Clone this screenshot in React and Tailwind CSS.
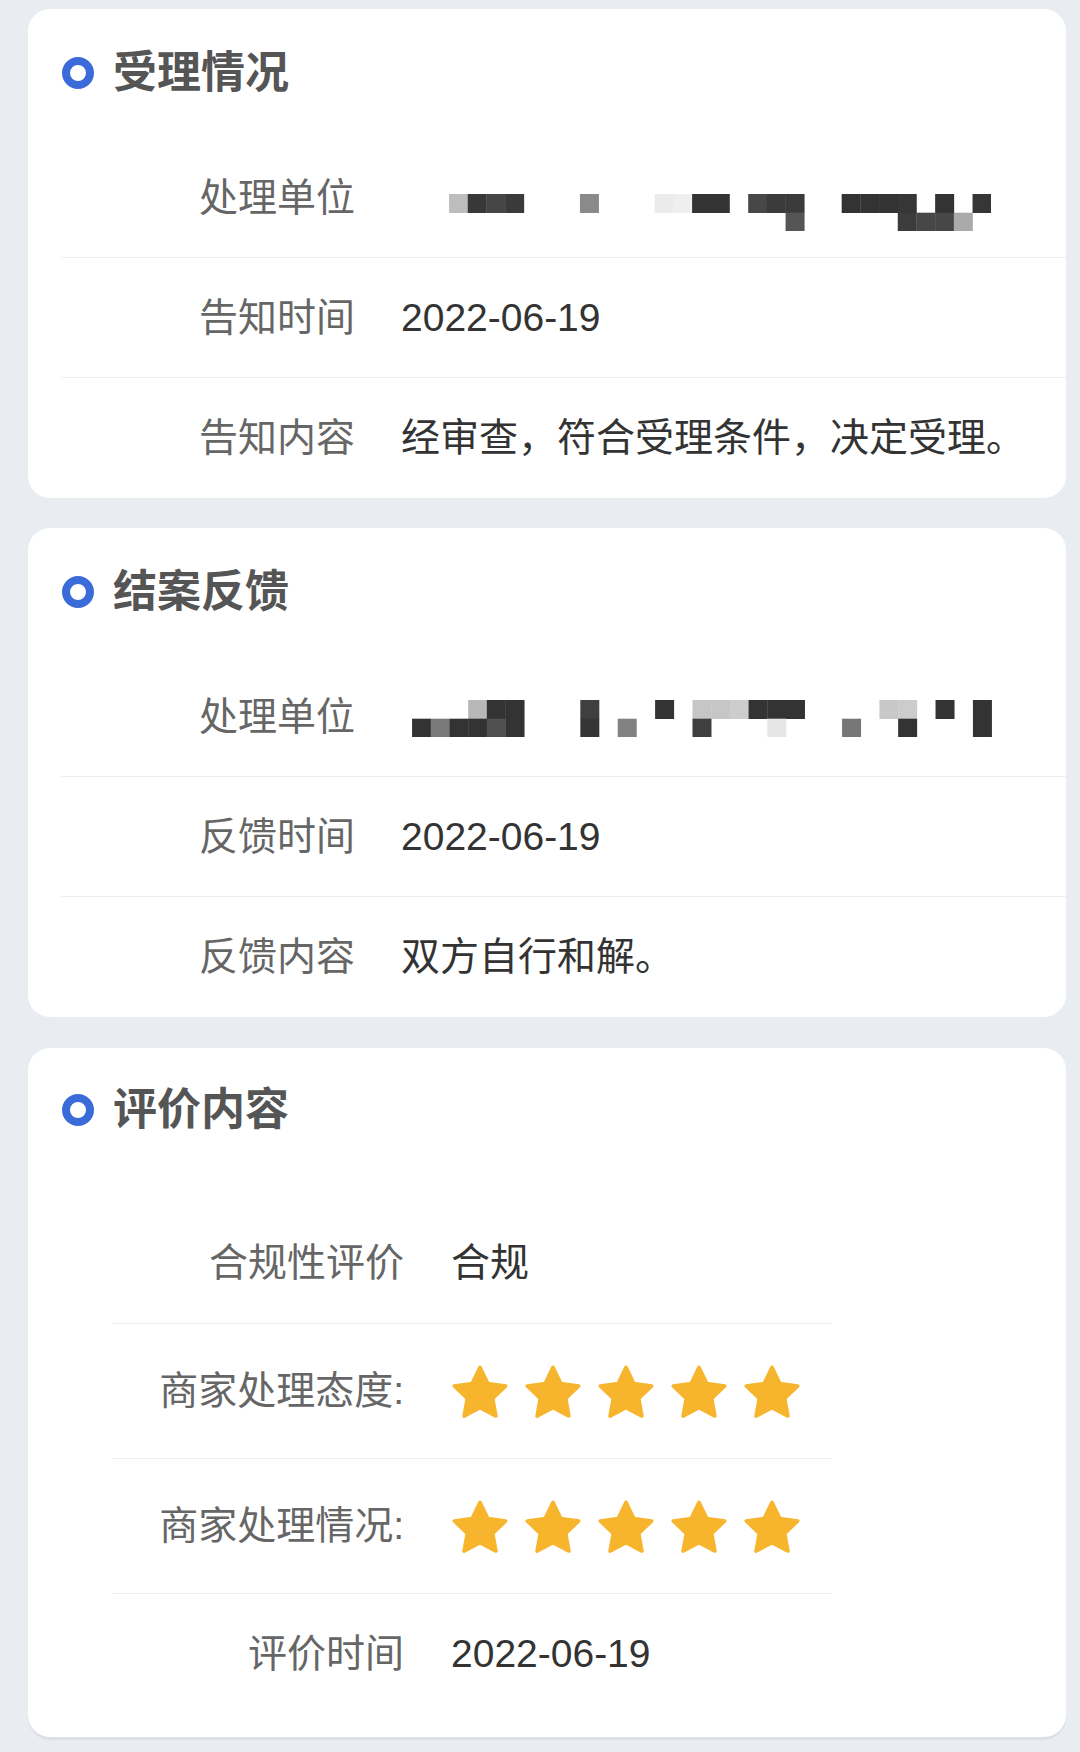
import React from 'react'

const CELL = 18.7

// redacted text, drawn as mosaic blocks [row, col, colour]
const mosaicA = [
  [0, 0, '#bdbdbd'], [0, 1, '#383838'], [0, 2, '#454545'], [0, 3, '#3a3a3a'],
  [0, 7, '#8a8a8a'], [0, 11, '#ebebeb'], [0, 12, '#efefef'], [0, 13, '#333333'],
  [0, 14, '#333333'], [0, 16, '#474747'], [0, 17, '#3b3b3b'], [0, 18, '#3b3b3b'],
  [0, 21, '#333333'], [0, 22, '#333333'], [0, 23, '#333333'], [0, 24, '#363636'],
  [0, 26, '#333333'], [0, 28, '#363636'],
  [1, 18, '#555555'], [1, 24, '#3c3c3c'], [1, 25, '#474747'], [1, 26, '#474747'],
  [1, 27, '#aaaaaa'],
]

const mosaicB = [
  [0, 3, '#b8b8b8'], [0, 4, '#333333'], [0, 5, '#333333'], [0, 9, '#3f3f3f'],
  [0, 13, '#333333'], [0, 15, '#c6c6c6'], [0, 16, '#c6c6c6'], [0, 17, '#cdcdcd'],
  [0, 18, '#333333'], [0, 19, '#333333'], [0, 20, '#333333'], [0, 25, '#c8c8c8'],
  [0, 26, '#cccccc'], [0, 28, '#333333'], [0, 30, '#333333'],
  [1, 0, '#333333'], [1, 1, '#7a7a7a'], [1, 2, '#333333'], [1, 3, '#333333'],
  [1, 4, '#505050'], [1, 5, '#333333'], [1, 9, '#353535'], [1, 11, '#828282'],
  [1, 15, '#3f3f3f'], [1, 19, '#e6e6e6'], [1, 23, '#777777'], [1, 26, '#333333'],
  [1, 30, '#333333'],
]

function Mosaic({ blocks, cols, className }) {
  const w = cols * CELL
  return (
    <svg width={w} height={CELL * 2} viewBox={`0 0 ${w} ${CELL * 2}`} className={className}>
      {blocks.map(([r, c, fill]) => (
        <rect key={`${r}-${c}`} x={c * CELL} y={r * CELL} width={CELL + 0.3} height={CELL + 0.3} fill={fill} />
      ))}
    </svg>
  )
}

function Star() {
  return (
    <svg width="56" height="53" viewBox="1.2 0.7 21.6 20.6">
      <polygon
        points="12,1.6 15.05,7.95 22,8.85 16.95,13.7 18.2,20.55 12,17.25 5.8,20.55 7.05,13.7 2,8.85 8.95,7.95"
        fill="#f7b52e"
        stroke="#f7b52e"
        strokeWidth="1.4"
        strokeLinejoin="round"
      />
    </svg>
  )
}

function Stars() {
  return (
    <div className="ml-[48px] flex gap-[17px]">
      {[0, 1, 2, 3, 4].map(i => <Star key={i} />)}
    </div>
  )
}

function Header({ title, className }) {
  return (
    <div className={`ml-[34px] flex h-[48px] items-center ${className}`}>
      <div className="h-[32px] w-[32px] rounded-full border-[8px] border-[#3a6bd8]"></div>
      <h2 className="ml-[19px] text-[44px] font-bold leading-[48px] text-[#555555]">{title}</h2>
    </div>
  )
}

function Row({ label, children, last }) {
  return (
    <div className={`flex h-[120px] items-center ${last ? '' : 'border-b border-[#eeeeee]'}`}>
      <div className="w-[294px] shrink-0 text-right text-[39px] leading-[48px] text-[#666666]">{label}</div>
      {children}
    </div>
  )
}

function Value({ children }) {
  return <span className="ml-[46px] text-[39px] leading-[48px] text-[#333333]">{children}</span>
}

function App() {
  return (
    <div className="min-h-[1752px] bg-[#e9edf1] pt-[9px] font-['Liberation_Sans','Noto_Sans_CJK_SC',sans-serif]">
      <div className="ml-[28px] w-[1038px] rounded-[22px] bg-white">
        <Header title="受理情况" className="pt-[40px] pb-[41px] h-[129px]" />
        <div className="ml-[33px]">
          <Row label="处理单位">
            <Mosaic blocks={mosaicA} cols={29} className="ml-[94px] mt-[56px] self-start" />
          </Row>
          <Row label="告知时间"><Value>2022-06-19</Value></Row>
          <Row label="告知内容" last><Value>经审查，符合受理条件，决定受理。</Value></Row>
        </div>
      </div>

      <div className="ml-[28px] mt-[30px] w-[1038px] rounded-[22px] bg-white">
        <Header title="结案反馈" className="pt-[40px] pb-[41px] h-[129px]" />
        <div className="ml-[33px]">
          <Row label="处理单位">
            <Mosaic blocks={mosaicB} cols={31} className="ml-[57px] mt-[43px] self-start" />
          </Row>
          <Row label="反馈时间"><Value>2022-06-19</Value></Row>
          <Row label="反馈内容" last><Value>双方自行和解。</Value></Row>
        </div>
      </div>

      <div className="ml-[28px] mt-[31px] w-[1038px] rounded-[22px] bg-white shadow-[0_3px_0_#dde1e6]">
        <Header title="评价内容" className="pt-[38px] pb-[55px] h-[141px]" />
        <div className="ml-[84px] w-[720px] text-[39px] leading-[48px]">
          <div className="flex h-[135px] items-center border-b border-[#eeeeee] pt-[14px]">
            <div className="w-[292px] shrink-0 text-right text-[#666666]">合规性评价</div>
            <span className="ml-[47px] text-[#333333]">合规</span>
          </div>
          <div className="flex h-[135px] items-center border-b border-[#eeeeee]">
            <div className="w-[292px] shrink-0 text-right text-[#666666]">商家处理态度:</div>
            <Stars />
          </div>
          <div className="flex h-[135px] items-center border-b border-[#eeeeee]">
            <div className="w-[292px] shrink-0 text-right text-[#666666]">商家处理情况:</div>
            <Stars />
          </div>
          <div className="flex h-[143px] items-center pb-[24px]">
            <div className="w-[292px] shrink-0 text-right text-[#666666]">评价时间</div>
            <span className="ml-[47px] text-[#333333]">2022-06-19</span>
          </div>
        </div>
      </div>
    </div>
  )
}

export default App
